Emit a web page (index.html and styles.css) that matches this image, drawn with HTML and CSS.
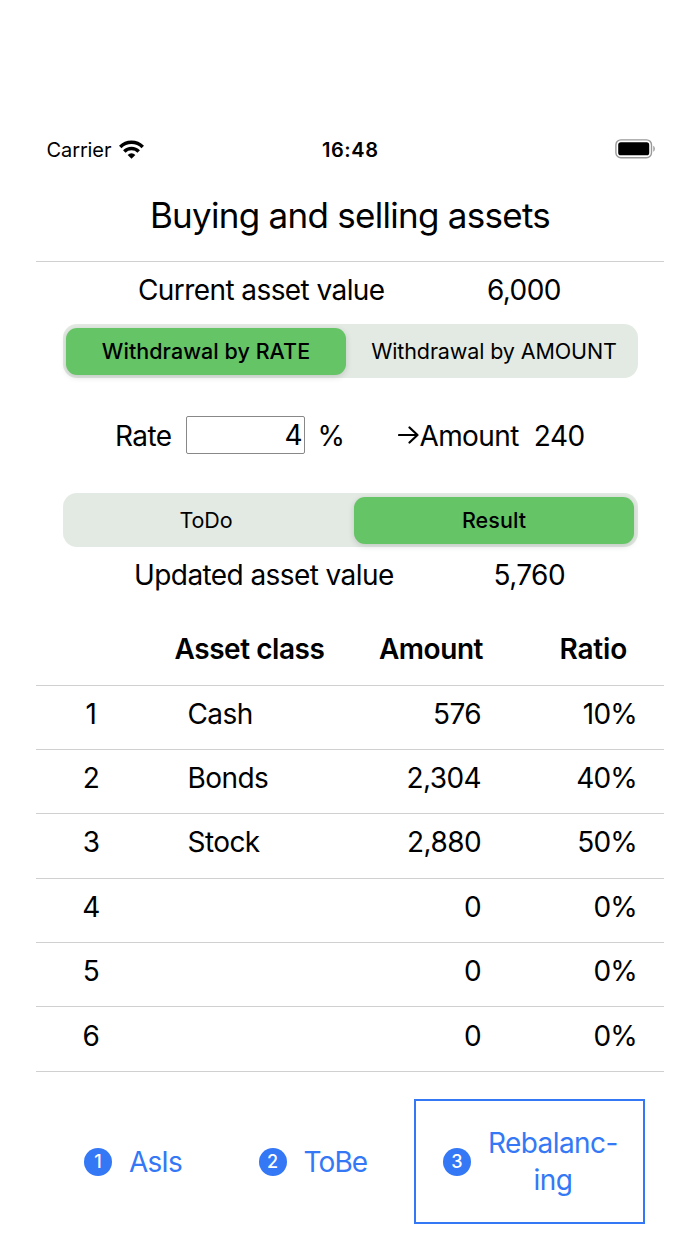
FILE: index.html
```html
<!DOCTYPE html>
<html lang="en">
<head>
  <meta charset="UTF-8">
  <title>Buying and selling assets</title>
  <link rel="stylesheet" href="styles.css">
</head>
<body>

<!-- Status bar -->
<header class="status-bar">
  <div class="carrier">
    <span>Carrier</span>
    <svg class="wifi" width="25" height="19" viewBox="0 0 26 19">
      <g fill="none" stroke="#000" stroke-width="3.6">
        <path d="M1.3 6.8a16.6 16.6 0 0 1 23.4 0"/>
        <path d="M5.5 11.5a10.6 10.6 0 0 1 15 0"/>
      </g>
      <path d="M13 19l-4-3.9a5.8 5.8 0 0 1 8 0z"/>
    </svg>
  </div>
  <span class="clock">16:48</span>
  <svg class="battery" width="41" height="20" viewBox="0 0 41 20">
    <rect x=".9" y=".9" width="35.6" height="17.8" rx="5" fill="none" stroke="#999" stroke-width="1.4"/>
    <rect x="3.2" y="3.3" width="31" height="13" rx="2.6"/>
    <path d="M38.3 6.8c2 .8 2 5.2 0 6z" fill="#999"/>
  </svg>
</header>

<main class="screen">
  <h1>Buying and selling assets</h1>

  <div class="summary current">
    <span class="label">Current asset value</span>
    <span>6,000</span>
  </div>

  <div class="segmented mode">
    <button class="active">Withdrawal by RATE</button>
    <button>Withdrawal by AMOUNT</button>
  </div>

  <div class="rate-row">
    <label for="rate">Rate</label>
    <input type="text" id="rate" value="4">
    <span class="percent">%</span>
    <svg class="arrow" width="21" height="18" viewBox="0 0 21 18">
      <path d="M1 9h18.5M11.5 1.5L19.5 9l-8 7.5" fill="none" stroke="#000" stroke-width="2.2" stroke-linecap="round" stroke-linejoin="round"/>
    </svg>
    <span class="amount-label">Amount</span>
    <span class="amount-value">240</span>
  </div>

  <div class="segmented view">
    <button>ToDo</button>
    <button class="active">Result</button>
  </div>

  <div class="summary updated">
    <span class="label">Updated asset value</span>
    <span>5,760</span>
  </div>

  <table>
    <thead>
      <tr><th></th><th>Asset class</th><th class="amount">Amount</th><th class="ratio">Ratio</th></tr>
    </thead>
    <tbody>
      <tr><td>1</td><td>Cash</td><td>576</td><td>10%</td></tr>
      <tr><td>2</td><td>Bonds</td><td>2,304</td><td>40%</td></tr>
      <tr><td>3</td><td>Stock</td><td>2,880</td><td>50%</td></tr>
      <tr><td>4</td><td></td><td>0</td><td>0%</td></tr>
      <tr><td>5</td><td></td><td>0</td><td>0%</td></tr>
      <tr><td>6</td><td></td><td>0</td><td>0%</td></tr>
    </tbody>
  </table>

  <!-- Steps -->
  <nav class="steps">
    <a class="asis"><span class="number">1</span><span>AsIs</span></a>
    <a class="tobe"><span class="number">2</span><span>ToBe</span></a>
    <a class="current-step"><span class="number">3</span><span class="step-name">Rebalanc-<br>ing</span></a>
  </nav>
</main>

</body>
</html>
```
FILE: styles.css
```css
* {
  margin: 0; padding: 0; box-sizing: border-box;
}
body {
  width: 700px;
  height: 1244px;
  overflow: hidden;
  padding-top: 130px;
  background: #fff;
  color: #000;
  font-family: Inter, sans-serif;
  font-size: 28px;
  letter-spacing: -0.58px;
}

/* Status bar */
.status-bar {
  display: grid;
  grid-template-columns: 1fr auto 1fr;
  align-items: center;
  height: 39px;
  padding: 0 44px 0 46.5px;
  font-size: 20px;
  letter-spacing: -0.1px;
}
.carrier {
  display: flex;
  align-items: center;
  gap: 8px;
}
.clock {
  margin-right: 2px;
  font-weight: 600;
  letter-spacing: 0.6px;
}
.battery {
  justify-self: end;
  margin-bottom: 1px;
}

.screen {
  padding: 0 36px;
}
h1 {
  height: 93px;
  line-height: 92px;
  border-bottom: 1px solid #d0d0d0;
  text-align: center;
  font-size: 35px;
  font-weight: 400;
  letter-spacing: -0.72px;
}

.summary {
  display: flex;
  white-space: nowrap;
  line-height: 34px;
}
.current {
  margin: 11px 0 17px 102px;
}
.current .label {
  width: 349px;
}
.updated {
  margin: 11px 0 0 98px;
}
.updated .label {
  width: 359.5px;
}

/* Segmented controls */
.segmented {
  display: flex;
  gap: 8px;
  width: 575px;
  height: 54px;
  margin: 0 26.5px;
  padding: 3.5px;
  border-radius: 14px;
  background: #e3eae3;
}
.segmented button {
  flex: 1;
  border: none;
  border-radius: 11px;
  background: none;
  color: #000;
  font: 400 21.5px Inter, sans-serif;
  letter-spacing: -0.12px;
  white-space: nowrap;
}
.segmented .active {
  background: #65c466;
  font-weight: 500;
  letter-spacing: 0.05px;
  box-shadow: 0 2px 6px rgba(0,0,0,0.15);
}

.rate-row {
  display: flex;
  align-items: center;
  height: 115px;
  padding-left: 79px;
}
.rate-row input {
  width: 119px;
  height: 38px;
  margin: -2px 13px 0 14px;
  padding-right: 1px;
  border: 1.5px solid #888;
  border-radius: 2px;
  text-align: right;
  font: inherit;
}
.arrow {
  margin-left: 54px;
  margin-top: -1px;
}
.amount-value {
  margin-left: 15px;
}

/* Assets */
table {
  width: 628px;
  margin-top: 21px;
  border-collapse: collapse;
  table-layout: fixed;
}
tr {
  height: 64.4px;
  border-bottom: 1px solid #d0d0d0;
}
thead tr {
  height: 72px;
}
th {
  font-weight: 600;
  letter-spacing: -0.45px;
  text-align: left;
}
th:first-child {
  width: 110px;
}
th:nth-child(2) {
  width: 220px;
  padding-left: 28.5px;
}
th.amount {
  width: 117px;
  text-align: right;
}
th.ratio {
  padding-right: 37px;
  text-align: right;
  letter-spacing: -0.2px;
}
td {
  padding-bottom: 7px;
  text-align: right;
}
td:first-child {
  text-align: center;
}
td:nth-child(2) {
  padding-left: 41.5px;
  text-align: left;
}
td:nth-child(3) {
  padding-right: 2px;
}
td:last-child {
  padding-right: 27px;
  letter-spacing: -0.8px;
}

/* Steps */
.steps {
  display: flex;
  align-items: center;
  margin-top: 27px;
  padding-left: 48px;
  color: #3478f6;
}
.steps a {
  display: flex;
  align-items: center;
  padding-top: 1px;
}
.number {
  width: 28px;
  height: 28px;
  margin-right: 17px;
  border-radius: 50%;
  background: #3478f6;
  color: #fff;
  text-align: center;
  line-height: 28px;
  font-size: 18px;
  font-weight: 500;
  letter-spacing: 0;
}
.asis {
  width: 174.5px;
}
.tobe {
  width: 155.5px;
}
.asis,
.tobe {
  letter-spacing: -0.9px;
}
.steps .current-step {
  width: 231px;
  height: 125px;
  padding-left: 27px;
  border: 2px solid #3478f6;
}
.step-name {
  text-align: center;
  line-height: 37px;
}
```
